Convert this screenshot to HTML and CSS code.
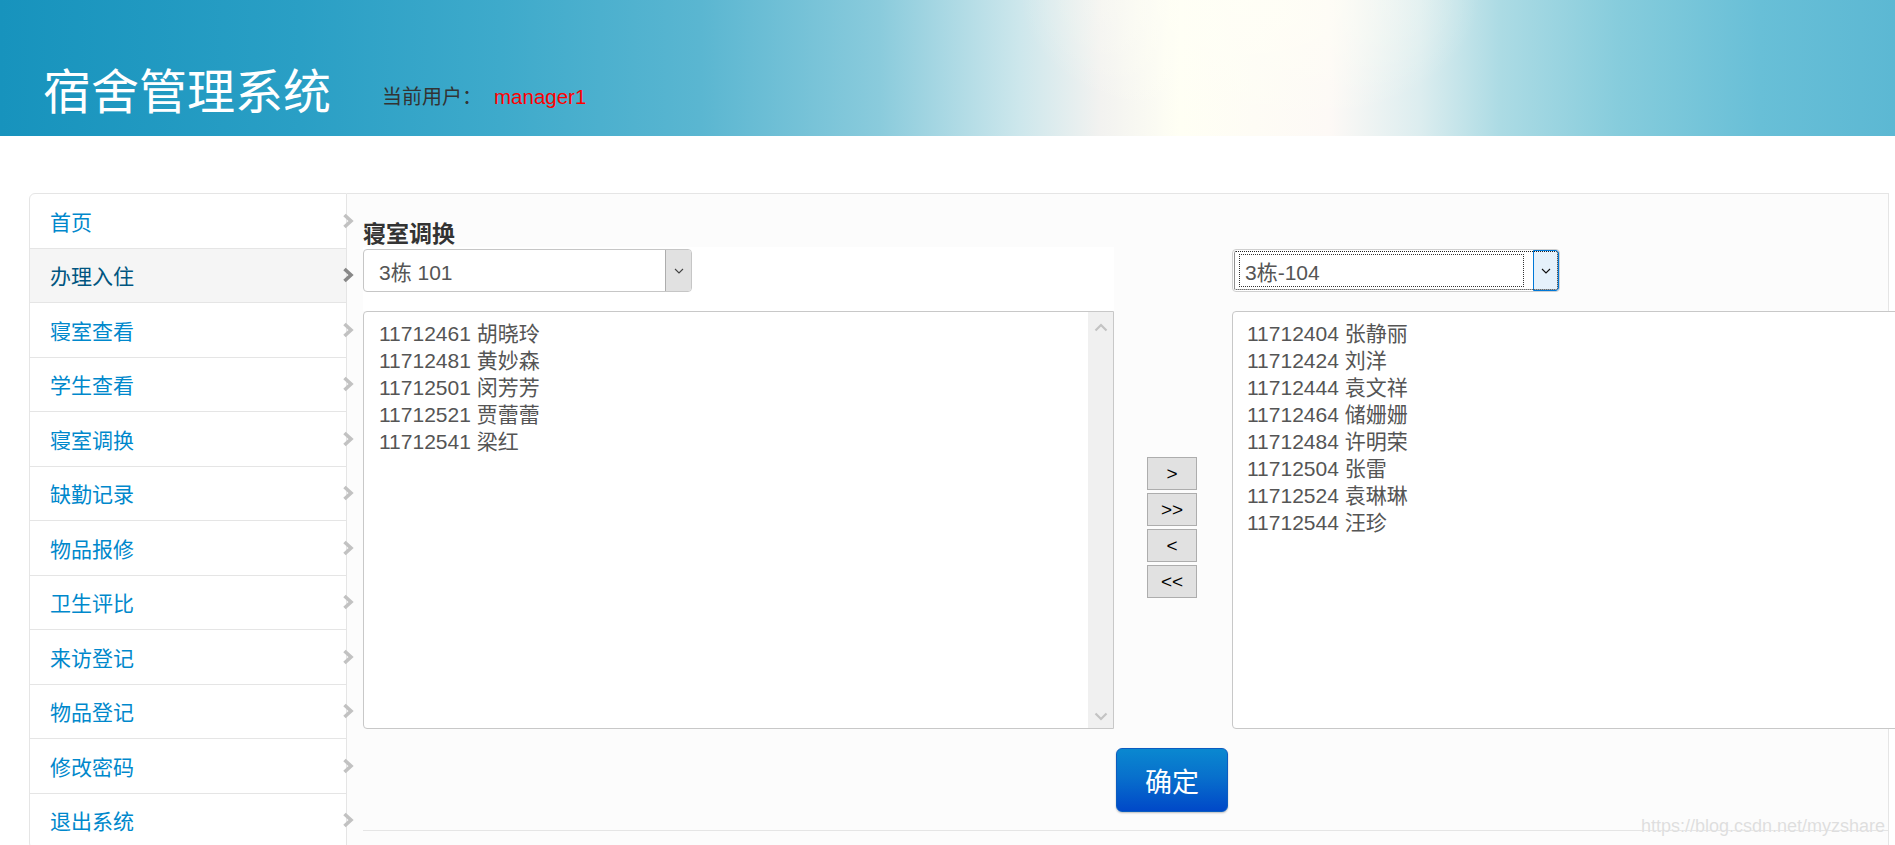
FILE: index.html
```html
<!DOCTYPE html>
<html lang="zh-CN">
<head>
<meta charset="utf-8">
<title>宿舍管理系统</title>
<link rel="stylesheet" href="styles.css">
</head>
<body>
<header class="topbar">
  <h1 class="brand">宿舍管理系统</h1>
  <div class="user-info">当前用户：<span class="user-name">manager1</span></div>
</header>

<main class="layout">
  <nav class="sidenav">
    <a class="nav-item">首页<svg class="chev" viewBox="0 0 12 16"><polyline points="2.5,2 9,8 2.5,14"/></svg></a>
    <a class="nav-item active">办理入住<svg class="chev" viewBox="0 0 12 16"><polyline points="2.5,2 9,8 2.5,14"/></svg></a>
    <a class="nav-item">寝室查看<svg class="chev" viewBox="0 0 12 16"><polyline points="2.5,2 9,8 2.5,14"/></svg></a>
    <a class="nav-item">学生查看<svg class="chev" viewBox="0 0 12 16"><polyline points="2.5,2 9,8 2.5,14"/></svg></a>
    <a class="nav-item">寝室调换<svg class="chev" viewBox="0 0 12 16"><polyline points="2.5,2 9,8 2.5,14"/></svg></a>
    <a class="nav-item">缺勤记录<svg class="chev" viewBox="0 0 12 16"><polyline points="2.5,2 9,8 2.5,14"/></svg></a>
    <a class="nav-item">物品报修<svg class="chev" viewBox="0 0 12 16"><polyline points="2.5,2 9,8 2.5,14"/></svg></a>
    <a class="nav-item">卫生评比<svg class="chev" viewBox="0 0 12 16"><polyline points="2.5,2 9,8 2.5,14"/></svg></a>
    <a class="nav-item">来访登记<svg class="chev" viewBox="0 0 12 16"><polyline points="2.5,2 9,8 2.5,14"/></svg></a>
    <a class="nav-item">物品登记<svg class="chev" viewBox="0 0 12 16"><polyline points="2.5,2 9,8 2.5,14"/></svg></a>
    <a class="nav-item">修改密码<svg class="chev" viewBox="0 0 12 16"><polyline points="2.5,2 9,8 2.5,14"/></svg></a>
    <a class="nav-item">退出系统<svg class="chev" viewBox="0 0 12 16"><polyline points="2.5,2 9,8 2.5,14"/></svg></a>
  </nav>

  <section class="panel">
    <h2 class="panel-title">寝室调换</h2>
    <div class="transfer-form">
      <div class="transfer">
        <div class="col col-left">
          <div class="select-wrap">
            <div class="select">
              <span class="select-text">3栋 101</span>
              <span class="select-arrow"><svg viewBox="0 0 10 6"><polyline points="1,1 5,5 9,1"/></svg></span>
            </div>
          </div>
          <div class="listbox">
            <div class="options">
              <div class="option">11712461 胡晓玲</div>
              <div class="option">11712481 黄妙森</div>
              <div class="option">11712501 闵芳芳</div>
              <div class="option">11712521 贾蕾蕾</div>
              <div class="option">11712541 梁红</div>
            </div>
            <div class="scrollbar">
              <svg class="sb-arrow" viewBox="0 0 14 9"><polyline points="1.5,7.5 7,2 12.5,7.5"/></svg>
              <svg class="sb-arrow" viewBox="0 0 14 9"><polyline points="1.5,1.5 7,7 12.5,1.5"/></svg>
            </div>
          </div>
        </div>

        <div class="col col-mid">
          <button class="move-btn">&gt;</button>
          <button class="move-btn">&gt;&gt;</button>
          <button class="move-btn">&lt;</button>
          <button class="move-btn">&lt;&lt;</button>
        </div>

        <div class="col col-right">
          <div class="select select-focus">
            <span class="select-text-focus">3栋-104</span>
            <span class="select-arrow arrow-focus"><svg viewBox="0 0 10 6"><polyline points="1,1 5,5 9,1"/></svg></span>
          </div>
          <div class="listbox listbox-right">
            <div class="options">
              <div class="option">11712404 张静丽</div>
              <div class="option">11712424 刘洋</div>
              <div class="option">11712444 袁文祥</div>
              <div class="option">11712464 储姗姗</div>
              <div class="option">11712484 许明荣</div>
              <div class="option">11712504 张雷</div>
              <div class="option">11712524 袁琳琳</div>
              <div class="option">11712544 汪珍</div>
            </div>
          </div>
        </div>
      </div>
      <div class="submit-row">
        <button class="btn-primary">确定</button>
      </div>
    </div>
  </section>
</main>

<div class="watermark">https://blog.csdn.net/myzshare</div>
</body>
</html>
```

FILE: styles.css
```css
html, body {
  margin: 0;
  padding: 0;
  overflow: hidden;
  height: 845px;
}

body {
  font-family: "Liberation Sans", "Noto Sans CJK SC", sans-serif;
  background: #ffffff;
  color: #333333;
}

/* ---------- header ---------- */
.topbar {
  height: 136px;
  display: flex;
  align-items: flex-start;
  padding-left: 43px;
  box-sizing: border-box;
  background:
    radial-gradient(ellipse 230px 130px at 1250px 0px, rgba(255, 255, 246, 0.85), rgba(255, 255, 246, 0) 100%),
    linear-gradient(to right,
      #1793bd 0px,
      #2a9fc5 300px,
      #3eaacb 500px,
      #5ab6d1 700px,
      #8acbdc 880px,
      #cde7ec 1020px,
      #f2f2f0 1100px,
      #fffff4 1180px,
      #fdf9f6 1330px,
      #dcedef 1420px,
      #acdbe4 1500px,
      #86ccdc 1620px,
      #68bfd7 1760px,
      #5cb8d3 1895px);
}

.brand {
  margin: 64px 0 0 0;
  font-size: 48px;
  line-height: 48px;
  font-weight: normal;
  color: #ffffff;
  font-family: "Noto Sans CJK SC", "Liberation Sans", sans-serif;
}

.user-info {
  margin: 87px 0 0 51px;
  font-size: 20px;
  line-height: 20px;
  color: #333333;
}

.user-name {
  color: #ff0000;
  margin-left: 12px;
  font-size: 20.5px;
}

/* ---------- layout ---------- */
.layout {
  display: flex;
  align-items: stretch;
  padding: 57px 0 0 29px;
}

/* ---------- side nav ---------- */
.sidenav {
  position: relative;
  z-index: 2;
  width: 318px;
  flex-shrink: 0;
  box-sizing: border-box;
  background: #ffffff;
  border: 1px solid #e5e5e5;
  border-radius: 6px 0 0 6px;
  display: flex;
  flex-direction: column;
}

.nav-item {
  height: 54.5px;
  box-sizing: border-box;
  border-bottom: 1px solid #e5e5e5;
  display: flex;
  align-items: center;
  justify-content: space-between;
  padding-left: 20px;
  font-size: 21px;
  color: #0088cc;
  text-decoration: none;
}

.nav-item.active {
  background: #f5f5f5;
  color: #005580;
}

.chev {
  width: 12px;
  height: 16px;
  margin-right: -8px;
  flex-shrink: 0;
}

.chev polyline {
  fill: none;
  stroke: #c2c2c2;
  stroke-width: 3.6;
}

.nav-item.active .chev polyline {
  stroke: #888888;
}

/* ---------- panel ---------- */
.panel {
  width: 1542px;
  flex-shrink: 0;
  box-sizing: border-box;
  background: #fcfcfc;
  border-top: 1px solid #e5e5e5;
  border-right: 1px solid #e5e5e5;
  padding: 23px 0 0 16px;
}

.panel-title {
  margin: 0;
  font-size: 23px;
  line-height: 30px;
  font-weight: bold;
  color: #333333;
  font-family: "Noto Sans CJK SC", "Liberation Sans", sans-serif;
}

.transfer-form {
  border-bottom: 1px solid #e5e5e5;
  padding-bottom: 18px;
}

.transfer {
  display: flex;
  align-items: flex-start;
}

.col {
  flex-shrink: 0;
}

.col-left {
  width: 751px;
}

.col-mid {
  width: 118px;
  padding-top: 210px;
  box-sizing: border-box;
  padding-left: 33px;
  display: flex;
  flex-direction: column;
  gap: 3px;
}

.col-right {
  width: 751px;
  padding-top: 2px;
}

.select-wrap {
  background: #ffffff;
  height: 64px;
  box-sizing: border-box;
  padding-top: 2px;
}

.select {
  width: 329px;
  height: 43px;
  box-sizing: border-box;
  border: 1px solid #c6c6c6;
  border-radius: 4px;
  background: #ffffff;
  display: flex;
  align-items: stretch;
  font-size: 21px;
  color: #555555;
  overflow: hidden;
}

.select-text {
  flex: 1;
  display: flex;
  align-items: center;
  padding-left: 15px;
}

.select-arrow {
  width: 26px;
  box-sizing: border-box;
  background: #e1e1e1;
  border-left: 1px solid #adadad;
  display: flex;
  align-items: center;
  justify-content: center;
}

.select-arrow svg {
  width: 10px;
  height: 6px;
}

.select-arrow polyline {
  fill: none;
  stroke: #444444;
  stroke-width: 1.1;
}

.select-focus {
  width: 328px;
  outline: 1px dotted #222222;
  outline-offset: -3px;
  border-color: #cfcfcf;
  padding: 0;
}

.select-text-focus {
  flex: 0 0 283px;
  box-sizing: border-box;
  margin: 5px 0 5px 7px;
  padding-left: 5px;
  display: flex;
  align-items: center;
  outline: 1px dotted #333333;
  color: #555555;
}

.arrow-focus {
  margin-left: auto;
  background: #e5f1fb;
  border: 1px solid #0078d7;
  border-radius: 0 3px 3px 0;
}

.arrow-focus polyline {
  stroke: #111111;
}

.listbox {
  height: 418px;
  box-sizing: border-box;
  border: 1px solid #c8c8c8;
  border-radius: 4px 0 0 4px;
  background: #ffffff;
  display: flex;
  margin-top: 0;
}

.listbox-right {
  margin-top: 19px;
}

.options {
  flex: 1;
  padding: 8px 0 0 15px;
  font-size: 21px;
  line-height: 27px;
  color: #555555;
}

.listbox-right .options {
  padding-left: 14px;
}

.option {
  white-space: nowrap;
}

.scrollbar {
  width: 25px;
  background: #f0f0f0;
  display: flex;
  flex-direction: column;
  justify-content: space-between;
  align-items: center;
  padding: 11px 0 7px;
}

.sb-arrow {
  width: 14px;
  height: 9px;
}

.sb-arrow polyline {
  fill: none;
  stroke: #c3c3c3;
  stroke-width: 2.2;
}

.move-btn {
  width: 50px;
  height: 33px;
  padding: 0;
  margin: 0;
  background: #e1e1e1;
  border: 1px solid #adadad;
  font-family: "Liberation Sans", sans-serif;
  font-size: 19px;
  color: #000000;
  line-height: 1;
}

.submit-row {
  padding: 19px 0 0 753px;
}

.btn-primary {
  width: 112px;
  height: 64px;
  margin: 0;
  padding: 0;
  border: 1px solid #0b5cc0;
  border-radius: 6px;
  background: linear-gradient(to bottom, #0a88d0 0%, #0870cc 45%, #0048c8 100%);
  box-shadow: 0 1px 2px rgba(0, 0, 0, 0.25);
  color: #ffffff;
  font-size: 27px;
  font-family: "Noto Sans CJK SC", "Liberation Sans", sans-serif;
  line-height: 1;
}

.watermark {
  position: absolute;
  right: 10px;
  bottom: 9px;
  font-size: 18px;
  line-height: 20px;
  color: #dedede;
  font-family: "Liberation Sans", sans-serif;
  text-shadow: 0 0 1px #ffffff;
}
```
